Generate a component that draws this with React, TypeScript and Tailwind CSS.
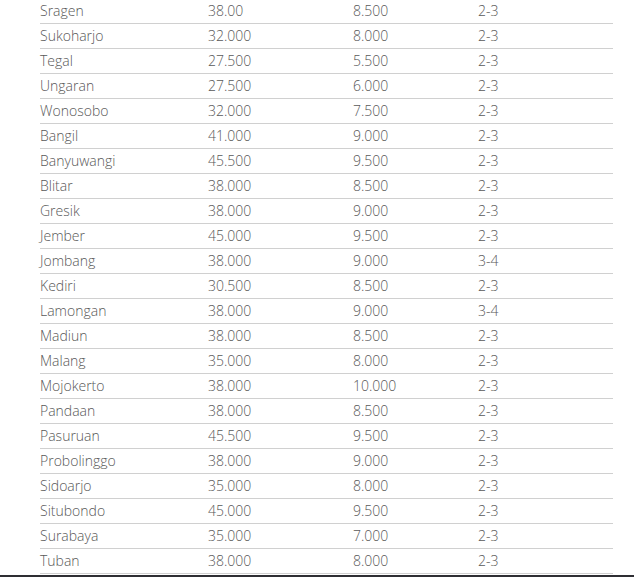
const ROWS = [
  ["Sragen", "38.00", "8.500", "2-3"],
  ["Sukoharjo", "32.000", "8.000", "2-3"],
  ["Tegal", "27.500", "5.500", "2-3"],
  ["Ungaran", "27.500", "6.000", "2-3"],
  ["Wonosobo", "32.000", "7.500", "2-3"],
  ["Bangil", "41.000", "9.000", "2-3"],
  ["Banyuwangi", "45.500", "9.500", "2-3"],
  ["Blitar", "38.000", "8.500", "2-3"],
  ["Gresik", "38.000", "9.000", "2-3"],
  ["Jember", "45.000", "9.500", "2-3"],
  ["Jombang", "38.000", "9.000", "3-4"],
  ["Kediri", "30.500", "8.500", "2-3"],
  ["Lamongan", "38.000", "9.000", "3-4"],
  ["Madiun", "38.000", "8.500", "2-3"],
  ["Malang", "35.000", "8.000", "2-3"],
  ["Mojokerto", "38.000", "10.000", "2-3"],
  ["Pandaan", "38.000", "8.500", "2-3"],
  ["Pasuruan", "45.500", "9.500", "2-3"],
  ["Probolinggo", "38.000", "9.000", "2-3"],
  ["Sidoarjo", "35.000", "8.000", "2-3"],
  ["Situbondo", "45.000", "9.500", "2-3"],
  ["Surabaya", "35.000", "7.000", "2-3"],
  ["Tuban", "38.000", "8.000", "2-3"],
];

export default function App() {
  return (
    <div className="w-[634px] h-[577px] bg-white overflow-hidden flex flex-col font-['Open_Sans',sans-serif] font-light text-[14px] text-[#585858]">
      {/* price table */}
      <div className="ml-[40px] w-[573px] flex flex-col">
        {ROWS.map((r, i) => (
          <div
            key={r[0]}
            className={`grid grid-cols-[168px_145px_125px_1fr] items-center border-b border-[#d0d0d0] ${
              i === 0 ? "h-[24px] pb-[3px]" : "h-[25px] pb-[2px]"
            }`}
          >
            <span>{r[0]}</span>
            <span>{r[1]}</span>
            <span>{r[2]}</span>
            <span>{r[3]}</span>
          </div>
        ))}
      </div>

      {/* footer edge */}
      <div className="mt-[1px] h-[2px] w-full bg-[#2e2e33]" />
    </div>
  );
}
